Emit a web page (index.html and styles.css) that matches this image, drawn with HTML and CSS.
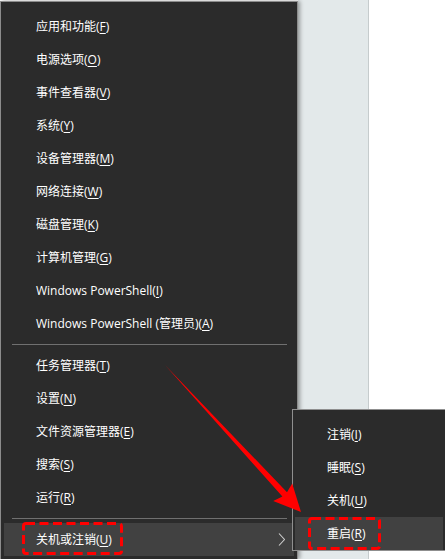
FILE: index.html
```html
<!DOCTYPE html>
<html lang="zh-CN">
<head>
<meta charset="utf-8">
<link rel="stylesheet" href="styles.css">
</head>
<body>
<div class="menu">
  <div class="item">应用和功能(<u>F</u>)</div>
  <div class="item">电源选项(<u>O</u>)</div>
  <div class="item">事件查看器(<u>V</u>)</div>
  <div class="item">系统(<u>Y</u>)</div>
  <div class="item">设备管理器(<u>M</u>)</div>
  <div class="item">网络连接(<u>W</u>)</div>
  <div class="item">磁盘管理(<u>K</u>)</div>
  <div class="item">计算机管理(<u>G</u>)</div>
  <div class="item">Windows PowerShell(<u>I</u>)</div>
  <div class="item">Windows PowerShell (管理员)(<u>A</u>)</div>
  <div class="sep"></div>
  <div class="item">任务管理器(<u>T</u>)</div>
  <div class="item">设置(<u>N</u>)</div>
  <div class="item">文件资源管理器(<u>E</u>)</div>
  <div class="item">搜索(<u>S</u>)</div>
  <div class="item">运行(<u>R</u>)</div>
  <div class="sep"></div>
  <div class="item active has-sub">
    <span>关机或注销(<u>U</u>)</span>
    <svg class="chev" width="7" height="13" viewBox="0 0 7 13"><polyline points="1,0.5 6.5,6.5 1,12.5" fill="none" stroke="#cfcfcf" stroke-width="1.1"/></svg>
  </div>
</div>
<div class="pane"></div>
<div class="rest"></div>

<div class="submenu">
  <div class="item">注销(<u>I</u>)</div>
  <div class="item">睡眠(<u>S</u>)</div>
  <div class="item">关机(<u>U</u>)</div>
  <div class="item active">重启(<u>R</u>)</div>
</div>

<svg class="mark mark-main" width="101" height="33" viewBox="0 0 101 33">
  <rect x="1.5" y="1.5" width="98" height="30" rx="2.5" fill="none" stroke="#ff0000" stroke-width="3" stroke-dasharray="9 4.5"/>
</svg>
<svg class="mark mark-sub" width="73" height="33" viewBox="0 0 73 33">
  <rect x="1.5" y="1.5" width="70" height="30" rx="2.5" fill="none" stroke="#ff0000" stroke-width="3" stroke-dasharray="9 4.5"/>
</svg>

<svg class="arrow" width="445" height="559" viewBox="0 0 445 559">
  <polygon points="165,365 287,492.2 292.2,483.4 301,512 273.2,501 282.4,496.6" fill="#ff0000"/>
</svg>
</body>
</html>
```

FILE: styles.css
```css
html, body {
  margin: 0;
  padding: 0;
}

body {
  width: 445px;
  height: 559px;
  overflow: hidden;
  position: relative;
  display: flex;
  align-items: flex-start;
  background: #ffffff;
  font-family: "Open Sans", "Noto Sans CJK SC", sans-serif;
  font-size: 12px;
  color: #ffffff;
}

.menu {
  flex: none;
  box-sizing: border-box;
  width: 298px;
  margin-top: 1px;
  height: 558px;
  padding: 8px 3px 0 3px;
  background: #2b2b2b;
  border: 1px solid #8c8c8c;
  border-bottom: 0;
  box-shadow: 2px 0 4px rgba(0, 0, 0, 0.35);
  position: relative;
  z-index: 1;
}

.pane {
  flex: none;
  width: 70px;
  height: 559px;
  background: #e3e9ea;
  border-right: 1px solid #c6cccd;
}

.rest {
  flex: 1;
  height: 559px;
  background: #ffffff;
}

.item {
  height: 33px;
  line-height: 33px;
  padding-left: 32px;
  white-space: nowrap;
}

.item u {
  text-decoration: underline;
  text-underline-offset: 2px;
}

.item.active {
  background: #414141;
}

.has-sub {
  display: flex;
  align-items: center;
  justify-content: space-between;
  padding-right: 9px;
}

.chev {
  display: block;
}

.sep {
  height: 1px;
  margin: 4px 7px 4px 8px;
  background: #707070;
}

.submenu {
  position: absolute;
  left: 292px;
  top: 409px;
  width: 153px;
  box-sizing: border-box;
  padding: 8px 2px 0 2px;
  background: #2b2b2b;
  border: 1px solid #8f8f8f;
  border-right: 0;
  z-index: 2;
}

.mark {
  position: absolute;
  display: block;
  z-index: 3;
}

.mark-main {
  left: 22px;
  top: 522px;
}

.mark-sub {
  left: 308px;
  top: 517px;
}

.arrow {
  position: absolute;
  left: 0;
  top: 0;
  z-index: 4;
  pointer-events: none;
}
```
